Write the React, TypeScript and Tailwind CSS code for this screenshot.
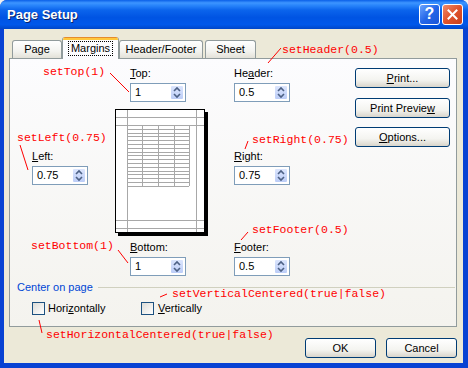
import React from "react";

const notes = [
  { text: "setTop(1)", x: 43, y: 65 },
  { text: "setHeader(0.5)", x: 282, y: 43 },
  { text: "setLeft(0.75)", x: 17, y: 131 },
  { text: "setRight(0.75)", x: 252, y: 133 },
  { text: "setFooter(0.5)", x: 252, y: 223 },
  { text: "setBottom(1)", x: 31, y: 239 },
  { text: "setVerticalCentered(true|false)", x: 172, y: 287 },
  { text: "setHorizontalCentered(true|false)", x: 46, y: 328 },
];

const leaders = [
  [110, 73, 129, 92],
  [281, 48, 268, 63],
  [20, 145, 28, 170],
  [248, 141, 245, 149],
  [248, 232, 241, 240],
  [118, 250, 128, 263],
  [167, 294, 160, 297],
  [39, 320, 42, 333],
];

function Label({ pre, u, post }: { pre?: string; u: string; post: string }) {
  return (
    <div className="h-[13px] leading-[13px] text-black">
      {pre}
      <span className="underline underline-offset-[1px]">{u}</span>
      {post}
    </div>
  );
}

function Spin({ value }: { value: string }) {
  return (
    <div className="mt-[3px] flex h-[19px] w-[56px] border border-[#7f9db9] bg-white">
      <div className="flex-1 pl-[4px] leading-[17px] text-black">{value}</div>
      <div className="m-[1px] flex w-[14px] items-center justify-center rounded-[2px] border border-white bg-[linear-gradient(to_bottom,#dbe5fd,#bccdf7)]">
        <svg width="10" height="13" viewBox="0 0 10 13">
          <path d="M2 5 L5 2 L8 5" fill="none" stroke="#4d6185" strokeWidth="1.6" />
          <path d="M2 8 L5 11 L8 8" fill="none" stroke="#4d6185" strokeWidth="1.6" />
        </svg>
      </div>
    </div>
  );
}

function Field({ pre, u, post, value }: { pre?: string; u: string; post: string; value: string }) {
  return (
    <div>
      <Label pre={pre} u={u} post={post} />
      <Spin value={value} />
    </div>
  );
}

function XpButton({ children, className }: { children: React.ReactNode; className?: string }) {
  return (
    <div
      className={`flex items-center justify-center rounded-[3px] border border-[#003c74] bg-[linear-gradient(to_bottom,#ffffff,#f4f4f0_60%,#d9d5cb)] text-black ${className || ""}`}
    >
      {children}
    </div>
  );
}

function Checkbox() {
  return <div className="h-[13px] w-[13px] border border-[#1c5180] bg-[linear-gradient(135deg,#dcdcd7,#ffffff)]" />;
}

function PagePreview() {
  const rows = Array.from({ length: 17 }, (_, i) => 16 + i * 3.8);
  return (
    <svg width="93" height="127" viewBox="0 0 93 127">
      <rect x="3" y="3" width="90" height="124" fill="#000" />
      <rect x="0.5" y="0.5" width="89" height="123" fill="#fff" stroke="#000" />
      <g stroke="#a8a8a8" strokeWidth="1">
        <line x1="12.5" y1="1" x2="12.5" y2="123" />
        <line x1="81.5" y1="1" x2="81.5" y2="123" />
        <line x1="1" y1="8.5" x2="89" y2="8.5" />
        <line x1="1" y1="16.5" x2="89" y2="16.5" />
        <line x1="1" y1="111.5" x2="89" y2="111.5" />
        <line x1="1" y1="119.5" x2="89" y2="119.5" />
        {rows.map((y, i) => (
          <line key={i} x1="12" y1={Math.round(y) + 0.5} x2="74" y2={Math.round(y) + 0.5} />
        ))}
        <line x1="27.5" y1="16" x2="27.5" y2="77" />
        <line x1="43.5" y1="16" x2="43.5" y2="77" />
        <line x1="59.5" y1="16" x2="59.5" y2="77" />
        <line x1="74.5" y1="16" x2="74.5" y2="77" />
      </g>
    </svg>
  );
}

export default function App() {
  return (
    <div className="relative h-[368px] w-[468px] bg-[#f0f0f0] font-['Liberation_Sans',Arial,sans-serif] text-[11px]">
      <div className="flex h-full flex-col overflow-hidden rounded-t-[7px] bg-[#0842d3]">
        {/* Title bar */}
        <div className="flex h-[29px] shrink-0 items-center bg-[linear-gradient(to_bottom,#0a5fe8_0%,#3d95ff_10%,#2a86fb_18%,#0b64ec_35%,#0054e3_60%,#0058ea_85%,#0046c8_100%)] pl-[7px] pr-[5px]">
          <div className="flex-1 text-[13px] font-bold text-white [text-shadow:1px_1px_0_#0a246a]">Page Setup</div>
          <div className="flex gap-[2px] pb-[1px]">
            <div className="flex h-[21px] w-[21px] items-center justify-center rounded-[3px] border border-white bg-[linear-gradient(135deg,#6aa4ff,#2466e8_50%,#1a55d8)] text-[16px] font-bold leading-none text-white">
              ?
            </div>
            <div className="flex h-[21px] w-[21px] items-center justify-center rounded-[3px] border border-white bg-[linear-gradient(135deg,#f08a6a,#e0532c_50%,#c8401c)]">
              <svg width="11" height="11" viewBox="0 0 11 11">
                <path d="M1.5 1.5 L9.5 9.5 M9.5 1.5 L1.5 9.5" stroke="#fff" strokeWidth="2" strokeLinecap="square" />
              </svg>
            </div>
          </div>
        </div>

        {/* Body */}
        <div className="mb-[5px] ml-[4px] mr-[5px] flex flex-1 flex-col bg-[#ece9d8] pl-[5px] pr-[6px] pt-[8px]">
          {/* Tabs */}
          <div className="flex h-[21px] items-end pl-[3px]">
            <div className="flex h-[18px] w-[50px] items-center justify-center rounded-t-[3px] border border-b-0 border-[#919b9c] bg-[linear-gradient(to_bottom,#ffffff,#f3f3ef_60%,#e3e1d8)] text-black">
              Page
            </div>
            <div className="relative z-10 -mb-px flex h-[22px] w-[57px] flex-col overflow-hidden rounded-t-[3px] border border-t-0 border-b-0 border-[#919b9c] bg-[#fcfcfe]">
              <div className="h-[1px] bg-[#e68b2c]" />
              <div className="h-[2px] bg-[#ffc73c]" />
              <div className="flex flex-1 items-center justify-center pb-[2px]">
                <span className="border border-dotted border-black px-[2px] leading-[13px] text-black">Margins</span>
              </div>
            </div>
            <div className="flex h-[18px] w-[84px] items-center justify-center rounded-t-[3px] border border-b-0 border-[#919b9c] bg-[linear-gradient(to_bottom,#ffffff,#f3f3ef_60%,#e3e1d8)] text-black">
              Header/Footer
            </div>
            <div className="ml-[2px] flex h-[18px] w-[51px] items-center justify-center rounded-t-[3px] border border-b-0 border-[#919b9c] bg-[linear-gradient(to_bottom,#ffffff,#f3f3ef_60%,#e3e1d8)] text-black">
              Sheet
            </div>
          </div>

          {/* Panel */}
          <div className="flex h-[269px] flex-col border border-[#919b9c] bg-[linear-gradient(to_bottom,#fcfcfe,#f4f3ee)] pt-[8px]">
            <div className="flex">
              <div className="w-[105px] shrink-0 pl-[22px] pt-[83px]">
                <Field u="L" post="eft:" value="0.75" />
              </div>
              <div className="flex w-[119px] shrink-0 flex-col">
                <div className="ml-[15px]">
                  <Field u="T" post="op:" value="1" />
                </div>
                <div className="mt-[7px]">
                  <PagePreview />
                </div>
                <div className="ml-[15px] mt-[5px]">
                  <Field u="B" post="ottom:" value="1" />
                </div>
              </div>
              <div className="flex w-[121px] shrink-0 flex-col">
                <Field pre="He" u="a" post="der:" value="0.5" />
                <div className="mt-[48px]">
                  <Field u="R" post="ight:" value="0.75" />
                </div>
                <div className="mt-[56px]">
                  <Field u="F" post="ooter:" value="0.5" />
                </div>
              </div>
              <div className="flex flex-col pt-[1px]">
                <XpButton className="h-[20px] w-[95px]">
                  <span>
                    <span className="underline">P</span>rint...
                  </span>
                </XpButton>
                <XpButton className="mt-[10px] h-[20px] w-[95px]">
                  <span>
                    Print Previe<span className="underline">w</span>
                  </span>
                </XpButton>
                <XpButton className="mt-[9px] h-[20px] w-[95px]">
                  <span>
                    <span className="underline">O</span>ptions...
                  </span>
                </XpButton>
              </div>
            </div>

            {/* Center on page */}
            <div className="mt-[5px] flex h-[13px] items-center pl-[7px] pr-[1px]">
              <span className="leading-[13px] text-[#0046d5]">Center on page</span>
              <div className="ml-[5px] h-px flex-1 bg-[#d0d0bf]" />
            </div>
            <div className="mt-[8px] flex h-[13px] items-center pl-[22px]">
              <div className="flex w-[109px] items-center gap-[3px]">
                <Checkbox />
                <span className="leading-[13px] text-black">
                  Hori<span className="underline">z</span>ontally
                </span>
              </div>
              <div className="flex items-center gap-[4px]">
                <Checkbox />
                <span className="leading-[13px] text-black">
                  <span className="underline">V</span>ertically
                </span>
              </div>
            </div>
          </div>

          {/* OK / Cancel */}
          <div className="mt-[11px] flex justify-end gap-[10px]">
            <XpButton className="h-[20px] w-[71px]">OK</XpButton>
            <XpButton className="h-[20px] w-[71px]">Cancel</XpButton>
          </div>
        </div>
      </div>

      {/* Annotations */}
      <svg className="pointer-events-none absolute left-0 top-0" width="468" height="368">
        {leaders.map(([x1, y1, x2, y2], i) => (
          <line key={i} x1={x1} y1={y1} x2={x2} y2={y2} stroke="#ff0000" strokeWidth="1" />
        ))}
      </svg>
      {notes.map((n) => (
        <div
          key={n.text}
          className="absolute whitespace-nowrap font-['Liberation_Mono','Courier_New',monospace] text-[11.5px] leading-[13px] text-[#ff0000]"
          style={{ left: n.x, top: n.y }}
        >
          {n.text}
        </div>
      ))}
    </div>
  );
}
